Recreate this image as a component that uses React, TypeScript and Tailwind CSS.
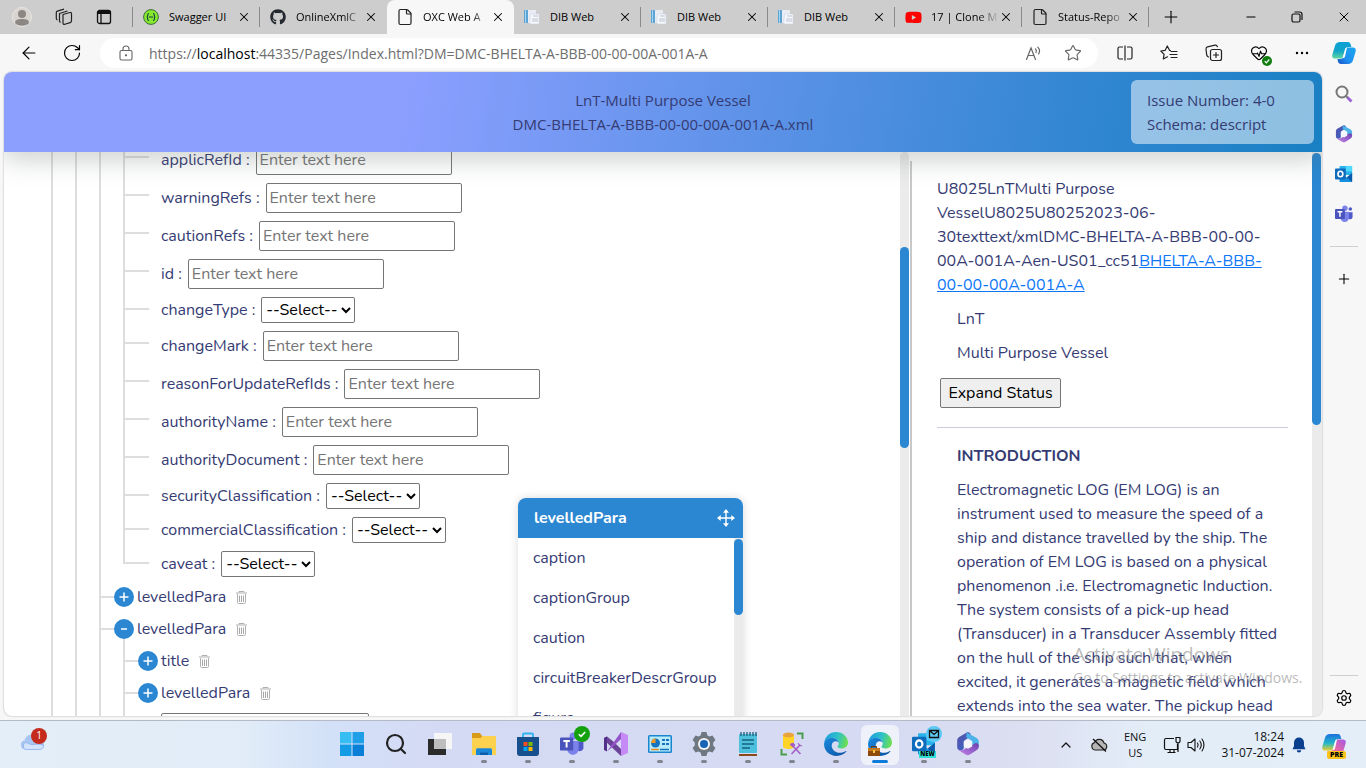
import React from "react";
import {
  ArrowLeft,
  ChevronUp,
  File,
  HeartPulse,
  Minus,
  Plus,
  RotateCw,
  Search,
  Settings,
  Star,
  X,
} from "lucide-react";
import { FaGithub, FaYoutube } from "react-icons/fa";

const ui = "font-['Open_Sans','Noto_Sans',sans-serif]";

/* ---------- brand and system icons ---------- */

function Swagger() {
  return (
    <svg viewBox="0 0 16 16" className="size-4">
      <circle cx="8" cy="8" r="7.4" fill="#85ea2d" stroke="#3c6b3a" strokeWidth="1" />
      <path d="M6 4.500c-1.600 0-1.200 1.300-1.300 2.300S4.300 8 3.700 8c.6 0 1 .2 1 1.200s-.3 2.300 1.300 2.300M10 4.500c1.600 0 1.200 1.300 1.300 2.300S11.700 8 12.300 8c-.6 0-1 .2-1 1.200s.3 2.300-1.300 2.300M6 8h4" fill="none" stroke="#173647" strokeWidth="1.100" />
    </svg>
  );
}

function DibIcon() {
  return (
    <svg viewBox="0 0 16 16" className="size-4">
      <rect x="0" y="1" width="4" height="13" fill="#5aa5d6" />
      <rect x="1" y="1" width="1" height="13" fill="#a8d3ee" />
      <rect x="4" y="1" width="8" height="13" fill="#e9edf3" />
      <path d="M7 5h8v10H6V9z" fill="#f7f8fb" stroke="#cdd3df" strokeWidth=".6" />
      <path d="M9 7h5M8 10h6M8 12h6" stroke="#b9c1d2" />
    </svg>
  );
}

function Copilot({ pre = false }: { pre?: boolean }) {
  return (
    <svg viewBox="0 0 24 24" className="size-6">
      <defs>
        <linearGradient id={pre ? "cpa" : "cba"} x1="0" y1="0" x2="0" y2="1">
          <stop offset="0" stopColor={pre ? "#1b6fe0" : "#0a9fd6"} />
          <stop offset=".55" stopColor={pre ? "#20b6c9" : "#12a5c8"} />
          <stop offset="1" stopColor={pre ? "#e8d030" : "#5fd8a0"} />
        </linearGradient>
        <linearGradient id={pre ? "cpb" : "cbb"} x1="1" y1="0" x2="0" y2="1">
          <stop offset="0" stopColor={pre ? "#a259e8" : "#1ba6ef"} />
          <stop offset=".6" stopColor={pre ? "#ee6aa0" : "#1e90f0"} />
          <stop offset="1" stopColor={pre ? "#f08a3c" : "#1a4fc4"} />
        </linearGradient>
      </defs>
      <path d="M8 1h8c1.500 0 2.300 1 2.700 2.500L19.400 6h-3c-2 0-2.800 1-3.300 2.700l-1.800 6.500c-.5 1.700-1.500 2.300-3 2.300H3C.8 17.500-.2 16 .4 13.600L3 4.700C3.800 2.200 5.500 1 8 1z" fill={`url(#${pre ? "cpa" : "cba"})`} />
      <path d="M16 23H9c-1.700 0-2.600-1-3-2.500L5.400 18h3c2 0 2.800-1 3.300-2.700l1.800-6.500C14 7 15 6.500 16.500 6.500H21c2.200 0 3.200 1.500 2.600 3.900L21 19.300c-.8 2.500-2.500 3.700-5 3.700z" fill={`url(#${pre ? "cpb" : "cbb"})`} />
      <path d="M10.600 17 13 8.500c.4-1.300 1-1.900 2-2l-2 9c-.4 1.200-1.200 1.600-2.400 1.500z" fill="#fff" />
    </svg>
  );
}

function M365({ className }: { className: string }) {
  return (
    <svg viewBox="0 0 20 20" className={className}>
      <defs>
        <linearGradient id="m3a" x1="0" y1="0" x2="1" y2="1">
          <stop offset="0" stopColor="#5b50a8" />
          <stop offset="1" stopColor="#2e69c8" />
        </linearGradient>
        <linearGradient id="m3b" x1="0" y1="1" x2="1" y2="0">
          <stop offset="0" stopColor="#c887ec" />
          <stop offset="1" stopColor="#6a3fae" />
        </linearGradient>
      </defs>
      <path d="M9 .5 3 4C1.600 4.800 1 5.800 1 7.300v5.500c0 1.500 1.300 2.700 3.200 2.500 1.600-.2 2.300-1.200 2.300-2.800V8.700c0-1 .4-1.700 1.300-2.200L12 4C13 2 11.500-.5 9 .5z" fill="url(#m3a)" />
      <path d="m9 .5 7.500 4C18.400 5.500 19 6.500 19 8.200v3.300c0 1.300-.8 2.300-2.300 2L13.500 12V8.700c0-1-.3-1.600-1.200-2.100L8.500 4.400z" fill="#4cb2e8" />
      <path d="M1.200 13.500c.8 1.700 3.300 2.300 5 1.300l9.500-5.300c1.700-.9 3.300.5 3.300 2.200 0 1.700-.7 2.700-2 3.500l-5.300 3.500c-1.300.8-2.500.8-3.800 0l-5-3c-1-.6-1.500-1.300-1.700-2.200z" fill="url(#m3b)" />
      <path d="m10 6 3.500 2v4L10 14l-3.500-2V8z" fill="#f5f6fb" />
    </svg>
  );
}

function Outlook({ className }: { className: string }) {
  return (
    <svg viewBox="0 0 20 20" className={className}>
      <path d="M6 1h12c.6 0 1 .4 1 1v9H5V2c0-.6.400-1 1-1z" fill="#28b2ec" />
      <path d="M12 1h7v6h-7z" fill="#50d9ff" />
      <path d="M5 9l8 5 6-5v9c0 .6-.4 1-1 1H6c-.6 0-1-.4-1-1z" fill="#1490df" />
      <path d="m19 9-6 5 6 5z" fill="#0a5cab" />
      <rect x="0" y="4" width="12" height="12" rx="1" fill="#0f6cbd" />
      <ellipse cx="6" cy="10" rx="2.700" ry="3" fill="none" stroke="#fff" strokeWidth="1.800" />
    </svg>
  );
}

function Teams({ className }: { className: string }) {
  return (
    <svg viewBox="0 0 20 20" className={className}>
      <circle cx="11" cy="3.500" r="3" fill="#7b83eb" />
      <circle cx="17" cy="4.500" r="2" fill="#5059c9" />
      <path d="M14 8h5.500v5.500a3 3 0 0 1-5.500 1z" fill="#5059c9" />
      <path d="M6 7.500h9.500V14c0 3-2 5-4.700 5S6 17 6 14z" fill="#7b83eb" />
      <rect x="0" y="4.500" width="11" height="11" rx="1" fill="#4b53bc" />
      <path d="M2.800 7.500h5.400M5.500 7.500v5.500" stroke="#fff" strokeWidth="1.600" />
    </svg>
  );
}

function SplitScreen() {
  return (
    <svg viewBox="0 0 16 16" className="size-4" fill="none" stroke="#222" strokeWidth="1.200">
      <path d="M6 2H2.500C1.500 2 1 2.500 1 3.500v9c0 1 .5 1.500 1.500 1.500H6M10 2h3.500c1 0 1.500.5 1.500 1.500v9c0 1-.5 1.500-1.500 1.500H10M8 .5v15" />
    </svg>
  );
}

function FavoritesList() {
  return (
    <svg viewBox="0 0 18 16" className="h-4 w-[18px]" fill="none" stroke="#222" strokeWidth="1.200" strokeLinejoin="round" strokeLinecap="round">
      <path d="M10.500 5.500 9.500 5.300 7.300 1 5.200 5.300.8 6l3.300 3.300-.8 4.700 4.200-2.200M11 6.500h6M10 9.500h7M11 12.500h6" />
    </svg>
  );
}

function Collections() {
  return (
    <svg viewBox="0 0 18 18" className="size-[18px]" fill="none" stroke="#222" strokeWidth="1.200" strokeLinejoin="round" strokeLinecap="round">
      <rect x="5.500" y="5.500" width="11" height="11" rx="2" />
      <path d="M11 8.500v5M8.500 11h5M3.500 13C2.500 12.700 2 12 1.700 11L1 5c-.1-1.300.5-2 1.500-2.200L10 1.200c1.300-.2 2 .3 2.400 1.500" />
    </svg>
  );
}

function ReadAloud() {
  return (
    <svg viewBox="0 0 18 16" className="h-4 w-[18px]" fill="none" stroke="#666" strokeWidth="1.200" strokeLinecap="round">
      <path d="M1.500 14.500 6 3l4.500 11.500M3 10.500h6M10.500 4c1 1 1 2.500.5 3.500M12.800 2.200c2 2 2 4.800.8 6.800" />
    </svg>
  );
}

function LockIcon() {
  return (
    <svg viewBox="0 0 14 16" className="h-4 w-3.5" fill="none" stroke="#666" strokeWidth="1.100">
      <rect x="1" y="5.500" width="12" height="9.500" rx="1.500" />
      <path d="M4 5.500V4a3 3 0 0 1 6 0v1.500" />
      <circle cx="7" cy="10.300" r=".6" fill="#666" />
    </svg>
  );
}

function Workspaces() {
  return (
    <svg viewBox="0 0 18 18" className="size-[18px]" fill="none" stroke="#222" strokeWidth="1.200" strokeLinejoin="round">
      <path d="m8 6.500 7-2c1-.2 1.500.2 1.500 1.200v7c0 1-.4 1.600-1.300 1.900l-5.400 1.700c-1.100.3-1.800-.1-1.800-1.300zM5.500 14.500C4.700 14.200 4.500 13.500 4.500 13V5.500L12.500 3M2.500 12C1.600 11.700 1.300 11 1.300 10.200V4.500c0-.8.4-1.200 1-1.400L9 1.200" />
    </svg>
  );
}

function TabActions() {
  return (
    <svg viewBox="0 0 16 16" className="size-4" fill="none" stroke="#111" strokeWidth="1.300">
      <rect x="1.500" y="1.500" width="13" height="13" rx="2" />
      <path d="M1.500 3.500h13" strokeWidth="3" />
      <path d="M5 5v9.500" />
    </svg>
  );
}

function TrashCan() {
  return (
    <svg viewBox="0 0 11 13" className="h-[13px] w-[11px]" fill="none" stroke="#b0b0b0" strokeWidth="1">
      <path d="M0 2h11M3 1.500V.5h5v1M1.500 3v8.500c0 .6.400 1 1 1h6c.6 0 1-.4 1-1V3" />
      <path d="M3.500 4.500v6.500M5.500 4.500v6.500M7.500 4.500v6.500" stroke="#8f8f8f" strokeWidth=".8" />
    </svg>
  );
}

function MoveIcon() {
  return (
    <svg viewBox="0 0 18 18" className="size-[18px]" fill="#fff">
      <path d="M9 0l3 3.700H6zM9 18l3-3.700H6zM0 9l3.700-3v6zM18 9l-3.700-3v6z" />
      <path d="M8.300 3h1.400v12H8.300zM3 8.300h12v1.400H3z" />
    </svg>
  );
}

function EdgeLogo({ work = false }: { work?: boolean }) {
  const id = work ? "w" : "e";
  return (
    <svg viewBox="0 0 24 24" className="size-6">
      <defs>
        <linearGradient id={id + "g"} x1="0" y1=".3" x2="1" y2=".5">
          <stop offset="0" stopColor="#1d9de0" />
          <stop offset=".55" stopColor="#2fc2c8" />
          <stop offset="1" stopColor="#6ddf4f" />
        </linearGradient>
        <linearGradient id={id + "b"} x1="0" y1="0" x2="1" y2="1">
          <stop offset="0" stopColor="#1b8be0" />
          <stop offset="1" stopColor="#0b4f9e" />
        </linearGradient>
      </defs>
      <path d="M.2 10.800C.8 4.600 5.800 0 12 0c6.800 0 12 5 12 10.500 0 3.800-3 6-6.300 6-3 0-4.500-1.200-4.200-2 .9-1.100 1.200-2 1.200-3.200 0-3-3-5.300-7-5.300C4 6 1.500 8 .2 10.800z" fill={`url(#${id}g)`} />
      <path d="M.1 11.500C.8 7.800 3.800 6 7.700 6c3.500 0 6.500 1.800 7 4.600-1-1-2.200-1.500-3.600-1.300-2.500.5-3.800 3-3.300 5.500.7 4 5 6.500 9.200 6 1.800-.2 3.200-.7 4.700-1.700.5-.3.900 0 .6.500C20 22.500 16.400 24 12.500 24 5.500 24-.6 18.500.1 11.500z" fill={`url(#${id}b)`} />
      {work && (
        <g>
          <path d="M0 16h12v8H0z" fill="#c9781b" />
          <path d="M0 19h12v5H0z" fill="#8d4a0c" />
          <path d="M3.500 16v-1.500h5V16" fill="none" stroke="#6d3706" />
          <rect x="5" y="18" width="2" height="3" fill="#f7c948" />
        </g>
      )}
    </svg>
  );
}

function Explorer() {
  return (
    <svg viewBox="0 0 24 24" className="size-6">
      <path d="M0 2c0-.8.500-1 1-1h7l2 3v4H0z" fill="#d99a17" />
      <path d="M0 6h8.500L10.500 4H23c.6 0 1 .4 1 1v17c0 .6-.4 1-1 1H1c-.6 0-1-.4-1-1z" fill="#fdd150" />
      <path d="M4 23v-5c0-1 .6-1.700 1.700-1.700h12.600c1.100 0 1.700.7 1.700 1.700v5z" fill="#1a86d8" />
      <path d="M8 23v-2.500h8V23z" fill="#0b5cab" />
    </svg>
  );
}

function Store() {
  return (
    <svg viewBox="0 0 24 24" className="size-6">
      <path d="M7 6V2.500c0-.6.400-1 1-1h8c.6 0 1 .4 1 1V6" fill="none" stroke="#2fb4ee" strokeWidth="1.800" />
      <path d="M1 5h22v16c0 1.700-1 3-2.700 3H3.700C2 24 1 22.700 1 21z" fill="#17508c" />
      <path d="M7.500 10h4v4h-4z" fill="#f25022" />
      <path d="M12.500 10h4v4h-4z" fill="#7fba00" />
      <path d="M7.500 15h4v4h-4z" fill="#00a4ef" />
      <path d="M12.500 15h4v4h-4z" fill="#ffb900" />
    </svg>
  );
}

function VisualStudio() {
  return (
    <svg viewBox="0 0 24 24" className="size-6">
      <path d="m0 6 3-1.500L20 18l-3 6L0 8z" fill="#6b4398" />
      <path d="M0 6v12l3 1.500V4.500z" fill="#52308a" />
      <path d="M3 19.500 17 0l1 7L6 17z" fill="#9455c8" />
      <path d="m17 0 7 3v18l-7 3z" fill="#c58af5" />
      <path d="m17 7-5 5 5 5z" fill="#d6dcf4" />
    </svg>
  );
}

function ControlPanel() {
  return (
    <svg viewBox="0 0 24 24" className="size-6">
      <rect x="0" y="3" width="24" height="18" rx="1.500" fill="#1a86cf" />
      <rect x="1.500" y="4.500" width="21" height="15" fill="#b9ecfb" />
      <circle cx="7.500" cy="11" r="4.500" fill="#1673c0" />
      <path d="M7.500 11V6.500A4.500 4.500 0 0 0 3 11z" fill="#f29b27" />
      <path d="M14 8h3M18 8h3M14 12h3M18 12h3" stroke="#1673c0" strokeWidth="2" />
      <path d="M3 17.500h8" stroke="#e78a1f" strokeWidth="1.500" />
      <path d="M12 17.500h9" stroke="#1673c0" strokeWidth="1.500" />
    </svg>
  );
}

function GearApp() {
  return (
    <svg viewBox="0 0 24 24" className="size-6">
      <path d="m9.500 0h5l.8 3.300 2 1.100 3.200-1L23.500 8l-2.300 2.500v3L23.500 16l-3 4.600-3.200-1-2 1.100-.8 3.300h-5l-.8-3.300-2-1.100-3.200 1L.5 16l2.300-2.500v-3L.5 8l3-4.600 3.200 1 2-1.100z" fill="#6f7880" />
      <circle cx="12" cy="12" r="6" fill="#eef2f7" />
      <circle cx="12" cy="12" r="4" fill="#1763b6" />
    </svg>
  );
}

function Notepad() {
  return (
    <svg viewBox="0 0 24 24" className="size-6">
      <rect x="3" y="2" width="18" height="19" rx="1" fill="#4cc0dc" />
      <path d="M5 0v4M8 0v4M11 0v4M14 0v4M17 0v4M20 0v4" stroke="#1c5c7a" strokeWidth="1.300" />
      <path d="M6 8h12M6 12h12M6 16h8" stroke="#17607c" strokeWidth="1.500" />
      <path d="M3 23h18" stroke="#8c4a1c" strokeWidth="2" />
    </svg>
  );
}

function SqlStudio() {
  return (
    <svg viewBox="0 0 24 24" className="size-6">
      <path d="M3 2.500v12C3 16 6 17 9 17s5-1 5-2.500v-12z" fill="#ffd426" />
      <ellipse cx="8.500" cy="3" rx="5.500" ry="2.500" fill="#e9a53b" />
      <path d="M17 1.500h5.500V7M1.500 17v5.500H7" fill="none" stroke="#4b9e4b" strokeWidth="2" />
      <path d="m12 13 8.500 9M20 13l-8.500 9" stroke="#a45fc4" strokeWidth="1.600" />
      <path d="m10 12.500 3-1.500 2 2-2 2zM18 11l1.500 2.500L22 14" fill="#a45fc4" stroke="#a45fc4" />
    </svg>
  );
}

function WindowsLogo() {
  return (
    <svg viewBox="0 0 24 24" className="size-6">
      <path d="M0 0h11.500v11.500H0z" fill="#35bdf4" />
      <path d="M12.500 0H24v11.500H12.500z" fill="#1e9fe8" />
      <path d="M0 12.500h11.500V24H0z" fill="#149be6" />
      <path d="M12.500 12.500H24V24H12.500z" fill="#0a7fd8" />
    </svg>
  );
}

function TaskView() {
  return (
    <svg viewBox="0 0 24 24" className="size-6">
      <path d="M0 7h18v16H0z" fill="#2b2b2b" />
      <path d="M6 1h18v16H6z" fill="#f6f6f6" />
      <path d="M6 7h12v10H6z" fill="#bdbdbd" />
    </svg>
  );
}

/* ---------- browser chrome ---------- */

type TabInfo = { title: string; icon: React.ReactNode; active?: boolean; nextActive?: boolean };

const page = <File className="size-[18px] text-[#222]" strokeWidth={1.6} />;

const tabs: TabInfo[] = [
  { title: "Swagger UI", icon: <Swagger /> },
  { title: "OnlineXmlC", icon: <FaGithub className="size-4 text-[#24292f]" />, nextActive: true },
  { title: "OXC Web A", icon: page, active: true },
  { title: "DIB Web", icon: <DibIcon /> },
  { title: "DIB Web", icon: <DibIcon /> },
  { title: "DIB Web", icon: <DibIcon /> },
  { title: "17 | Clone M", icon: <FaYoutube className="size-[17px] text-[#ff0000]" /> },
  { title: "Status-Repo", icon: page },
];

function TabStrip() {
  return (
    <div className="flex h-[34px] shrink-0 items-center bg-[#cdcdcd]">
      <div className="flex h-5 w-[133px] shrink-0 items-center justify-between border-r border-[#8a8a8a] pr-5 pl-3">
        <svg viewBox="0 0 20 20" className="size-5">
          <circle cx="10" cy="10" r="9.500" fill="#d8d5d0" stroke="#e8e6e3" />
          <circle cx="10" cy="7" r="4" fill="#8c8784" />
          <path d="M3 16c0-3 2-4 7-4s7 1 7 4c-3 3.500-11 3.500-14 0z" fill="#8c8784" />
        </svg>
        <Workspaces />
        <TabActions />
      </div>
      {tabs.map((t, i) => (
        <div
          key={i}
          className={`flex w-[127px] shrink-0 items-center ${
            t.active ? "h-[34px] rounded-t-lg bg-[#f7f7f7]" : "h-5"
          } ${t.active || t.nextActive ? "" : "border-r border-[#8a8a8a]"}`}
        >
          <span className="flex w-9 shrink-0 justify-center">{t.icon}</span>
          <span className={`w-[68px] text-[11px] whitespace-nowrap text-black ${t.title.length > 8 && i > 0 ? "mask-r-from-70% mask-r-to-100%" : ""}`}>
            {t.title}
          </span>
          <button aria-label={`Close ${t.title}`}>
            <X className="size-3.5" strokeWidth={1.800} />
          </button>
        </div>
      ))}
      <button aria-label="New tab" className="ml-3">
        <Plus className="size-5" strokeWidth={1.300} />
      </button>
      <div className="ml-auto flex items-center gap-8 pr-3.5">
        <button aria-label="Minimize">
          <Minus className="size-3.5" strokeWidth={1.800} />
        </button>
        <button aria-label="Restore">
          <svg viewBox="0 0 14 14" className="size-3.5" fill="none" stroke="#111" strokeWidth="1.200">
            <rect x="2" y="4" width="8" height="8" rx="1.500" />
            <path d="M4.500 2h5C11.300 2 12 2.700 12 4.500V10" />
          </svg>
        </button>
        <button aria-label="Close window">
          <X className="size-4" strokeWidth={1.500} />
        </button>
      </div>
    </div>
  );
}

function Toolbar() {
  return (
    <div className="flex h-[38px] shrink-0 items-center bg-[#f7f7f7] pr-2.5 pl-[19px]">
      <button aria-label="Back">
        <ArrowLeft className="size-5" strokeWidth={1.400} />
      </button>
      <button aria-label="Refresh" className="ml-[23px]">
        <RotateCw className="size-5" strokeWidth={1.400} />
      </button>
      <div className="ml-[18px] flex h-[30px] flex-1 items-center rounded-full bg-white pr-4 pl-[19px]">
        <LockIcon />
        <p className="ml-4 flex-1 text-[14px] whitespace-nowrap text-[#6e6e6e]">
          https://<span className="text-black">localhost</span>:44335/Pages/Index.html?DM=DMC-BHELTA-A-BBB-00-00-00A-001A-A
        </p>
        <button aria-label="Read aloud" className="mr-[21px]">
          <ReadAloud />
        </button>
        <button aria-label="Add to favorites">
          <Star className="size-[18px] text-[#666]" strokeWidth={1.500} />
        </button>
      </div>
      <div className="ml-[19px] flex items-center gap-[27px]">
        <button aria-label="Split screen"><SplitScreen /></button>
        <button aria-label="Favorites"><FavoritesList /></button>
        <button aria-label="Collections"><Collections /></button>
        <button aria-label="Browser essentials" className="relative">
          <HeartPulse className="size-[18px]" strokeWidth={1.500} />
          <svg viewBox="0 0 10 10" className="absolute -right-1 -bottom-1 size-2.5">
            <circle cx="5" cy="5" r="5" fill="#107c10" />
            <path d="m2.700 5.200 1.600 1.600 3-3.300" fill="none" stroke="#fff" strokeWidth="1.200" />
          </svg>
        </button>
        <button aria-label="More">
          <svg viewBox="0 0 14 4" className="h-1 w-3.5"><circle cx="2" cy="2" r="1.200" /><circle cx="7" cy="2" r="1.200" /><circle cx="12" cy="2" r="1.200" /></svg>
        </button>
        <button aria-label="Copilot" className="-ml-1"><Copilot /></button>
      </div>
    </div>
  );
}

function Sidebar() {
  return (
    <aside className="flex w-11 shrink-0 flex-col items-center bg-[#f7f7f7]">
      <div className="mt-[13px] flex flex-col items-center gap-[22px]">
        <button aria-label="Search" className="flex">
          <svg viewBox="0 0 18 18" className="size-[18px]" fill="none">
            <circle cx="7" cy="7" r="5.500" stroke="#777" strokeWidth="2" />
            <path d="m11 11 2.500 2.500" stroke="#777" strokeWidth="2" />
            <path d="m12.500 12.500 4 4" stroke="#9b62d8" strokeWidth="2.800" />
          </svg>
        </button>
        <button aria-label="Microsoft 365" className="flex"><M365 className="size-[18px]" /></button>
        <button aria-label="Outlook" className="flex"><Outlook className="size-[18px]" /></button>
        <button aria-label="Teams" className="flex"><Teams className="size-[18px]" /></button>
      </div>
      <div className="mt-[23px] h-px w-7 bg-[#cfcfcf]" />
      <button aria-label="Customize sidebar" className="mt-6">
        <Plus className="size-4" strokeWidth={1.600} />
      </button>
      <div className="mt-auto h-px w-7 bg-[#cfcfcf]" />
      <button aria-label="Settings" className="mt-[13px] mb-[9px]">
        <Settings className="size-[18px]" strokeWidth={1.600} />
      </button>
    </aside>
  );
}

/* ---------- element tree ---------- */

const attributes: { name: string; kind: "text" | "select" }[] = [
  { name: "applicRefId", kind: "text" },
  { name: "warningRefs", kind: "text" },
  { name: "cautionRefs", kind: "text" },
  { name: "id", kind: "text" },
  { name: "changeType", kind: "select" },
  { name: "changeMark", kind: "text" },
  { name: "reasonForUpdateRefIds", kind: "text" },
  { name: "authorityName", kind: "text" },
  { name: "authorityDocument", kind: "text" },
  { name: "securityClassification", kind: "select" },
  { name: "commercialClassification", kind: "select" },
  { name: "caveat", kind: "select" },
];

function AttributeRow({ name, kind, last }: { name: string; kind: string; last: boolean }) {
  return (
    <div className="flex">
      <div className={`w-[26px] border-l-2 border-[#dddddd] ${last ? "h-[13px]" : ""}`}>
        <div className="h-[13px] border-b-2 border-[#dddddd]" />
      </div>
      <div className={`ml-3 flex items-center gap-1.5 whitespace-nowrap ${last ? "" : "pb-2"}`}>
        <label htmlFor={name}>{name} :</label>
        {kind === "text" ? (
          <input
            id={name}
            placeholder="Enter text here"
            className="h-[30px] w-[196px] rounded-xs border border-[#767676] bg-white px-[3px] placeholder:text-[#757575]"
          />
        ) : (
          <select id={name} className="h-[26px] w-[94px] rounded-xs border border-[#767676] bg-white text-black">
            <option>--Select--</option>
          </select>
        )}
      </div>
    </div>
  );
}

function TreeNode({ name, open = false }: { name: string; open?: boolean }) {
  return (
    <div className="flex h-8 items-center">
      <div className="h-0.5 w-[13px] bg-[#dddddd]" />
      <button
        aria-label={open ? `Collapse ${name}` : `Expand ${name}`}
        className="flex size-5 items-center justify-center rounded-full bg-[#2b87d1] text-white"
      >
        {open ? (
          <svg viewBox="0 0 10 10" className="size-2.5"><path d="M2 5h6" stroke="#fff" strokeWidth="1.700" /></svg>
        ) : (
          <svg viewBox="0 0 10 10" className="size-2.5"><path d="M.5 5h9M5 .5v9" stroke="#fff" strokeWidth="1.500" /></svg>
        )}
      </button>
      <span className="ml-[3px]">{name}</span>
      <button aria-label={`Delete ${name}`} className="ml-2.5">
        <TrashCan />
      </button>
    </div>
  );
}

function TreePane() {
  return (
    <section className="flex min-w-0 flex-1 overflow-hidden">
      <div className="flex flex-1 overflow-hidden pl-[47px]">
        <div className="w-6 shrink-0 border-l-2 border-[#dddddd]" />
        <div className="w-6 shrink-0 border-l-2 border-[#dddddd]" />
        <div className="-mt-[7px] flex-1 border-l-2 border-[#dddddd]">
          <div className="mb-1 pl-[22px]">
            {attributes.map((a, i) => (
              <AttributeRow key={a.name} {...a} last={i === attributes.length - 1} />
            ))}
          </div>
          <TreeNode name="levelledPara" />
          <TreeNode name="levelledPara" open />
          <div className="-mt-1.5 ml-[22px] border-l-2 border-[#dddddd] pt-1.5">
            <TreeNode name="title" />
            <TreeNode name="levelledPara" />
            <input aria-label="levelledPara value" className="mt-1 ml-9 h-[30px] w-[208px] rounded-xs border border-[#767676] bg-white px-1" />
          </div>
        </div>
      </div>
      <div className="w-[9px] shrink-0 rounded-t-md bg-[#ebebeb] pt-[95px]">
        <div className="h-[201px] rounded-full bg-[#2b87d1]" />
      </div>
    </section>
  );
}

/* ---------- document preview ---------- */

function PreviewPane() {
  return (
    <section className="flex w-[413px] shrink-0 overflow-hidden">
      <div className="mt-[9px] ml-px w-0.5 shrink-0 bg-[#c8c8c8]" />
      <div className="min-w-0 flex-1 overflow-hidden pt-[25px] pr-6 pl-[25px] leading-6 whitespace-nowrap">
        <p>
          U8025LnTMulti Purpose
          <br />
          VesselU8025U80252023-06-
          <br />
          30texttext/xmlDMC-BHELTA-A-BBB-00-00-
          <br />
          00A-001A-Aen-US01_cc51
          <a href="#dm" className="text-[#0d76f9] underline">
            BHELTA-A-BBB-
            <br />
            00-00-00A-001A-A
          </a>
        </p>
        <p className="mt-2.5 ml-5">LnT</p>
        <p className="mt-2.5 ml-5">Multi Purpose Vessel</p>
        <button className="mt-[13px] ml-[3px] h-[30px] w-[121px] rounded-xs border border-[#767676] bg-[#efefef] text-black">
          Expand Status
        </button>
        <hr className="mt-[19px] border-[#cbcddb]" />
        <h2 className="mt-4 ml-5 font-bold">INTRODUCTION</h2>
        <p className="mt-2.5 ml-5">
          Electromagnetic LOG (EM LOG) is an
          <br />
          instrument used to measure the speed of a
          <br />
          ship and distance travelled by the ship. The
          <br />
          operation of EM LOG is based on a physical
          <br />
          phenomenon .i.e. Electromagnetic Induction.
          <br />
          The system consists of a pick-up head
          <br />
          (Transducer) in a Transducer Assembly fitted
          <br />
          on the hull of the ship such that, when
          <br />
          excited, it generates a magnetic field which
          <br />
          extends into the sea water. The pickup head
        </p>
      </div>
      <div className="w-[10px] shrink-0 bg-[#ebebeb] pt-px pr-px">
        <div className="h-[272px] rounded-full bg-[#2b87d1]" />
      </div>
    </section>
  );
}

function ElementMenu() {
  return (
    <div className="absolute top-[426px] left-[514px] z-20 w-[225px] rounded-t-lg bg-white shadow-[0_0_10px_rgba(0,0,0,0.15)]">
      <div className="flex h-10 items-center justify-between rounded-t-lg bg-[#2b87d1] pr-2 pl-4 font-bold text-white">
        levelledPara
        <MoveIcon />
      </div>
      <div className="flex">
        <ul className="flex-1 pl-[15px]">
          {["caption", "captionGroup", "caution", "circuitBreakerDescrGroup", "figure"].map((n) => (
            <li key={n} className="flex h-10 items-center">{n}</li>
          ))}
        </ul>
        <div className="w-[9px] bg-[#ebebeb] pt-px">
          <div className="h-19 rounded-full bg-[#2b87d1]" />
        </div>
      </div>
    </div>
  );
}

function WebPage() {
  return (
    <main className="relative ml-1 flex min-w-0 flex-1 flex-col overflow-hidden rounded-lg bg-white font-[Nunito,Lato,sans-serif] text-[16px] leading-6 text-[#353b73] shadow-[0_0_2px_rgba(0,0,0,0.35)]">
      <header className={`relative z-10 flex h-20 shrink-0 items-center bg-[linear-gradient(100deg,#8c9fff_30%,#3487d3_80%,#1980c3_100%)] pr-2 shadow-[0_8px_24px_rgba(90,105,100,0.3)] ${ui}`}>
        <div className="w-[191px] shrink-0" />
        <div className="flex-1 text-center text-[15px]">
          <p>LnT-Multi Purpose Vessel</p>
          <p>DMC-BHELTA-A-BBB-00-00-00A-001A-A.xml</p>
        </div>
        <div className="w-[183px] shrink-0 rounded-md bg-white/50 px-4 py-2 text-[15px]">
          <p>Issue Number: 4-0</p>
          <p>Schema: descript</p>
        </div>
      </header>
      <div className="flex min-h-0 flex-1">
        <TreePane />
        <PreviewPane />
      </div>
      <ElementMenu />
      <div className={`pointer-events-none absolute right-3 bottom-7 z-30 w-[237px] whitespace-nowrap text-[#8a8a8a]/60 ${ui}`}>
        <p className="mb-0.5 text-[19px] leading-6">Activate Windows</p>
        <p className="text-[14px] leading-5">Go to Settings to activate Windows.</p>
      </div>
    </main>
  );
}

/* ---------- taskbar ---------- */

const apps: { name: string; icon: React.ReactNode; running?: boolean; active?: boolean }[] = [
  { name: "Start", icon: <WindowsLogo /> },
  { name: "Search", icon: <Search className="size-6 text-[#222]" strokeWidth={2.200} /> },
  { name: "Task view", icon: <TaskView /> },
  { name: "File Explorer", icon: <Explorer />, running: true },
  { name: "Store", icon: <Store />, running: true },
  {
    name: "Teams",
    running: true,
    icon: (
      <>
        <Teams className="size-6" />
        <svg viewBox="0 0 16 16" className="absolute -top-1.5 -right-1.5 size-4">
          <circle cx="8" cy="8" r="8" fill="#13a10e" />
          <path d="m4.800 8.200 2.200 2.200 4.200-4.400" fill="none" stroke="#fff" strokeWidth="1.600" />
        </svg>
      </>
    ),
  },
  { name: "Visual Studio", icon: <VisualStudio />, running: true },
  { name: "Control Panel", icon: <ControlPanel />, running: true },
  { name: "Settings app", icon: <GearApp />, running: true },
  { name: "Notepad", icon: <Notepad />, running: true },
  { name: "SQL Studio", icon: <SqlStudio />, running: true },
  { name: "Edge", icon: <EdgeLogo />, running: true },
  { name: "Edge work", icon: <EdgeLogo work />, active: true },
  {
    name: "Outlook new",
    running: true,
    icon: (
      <>
        <Outlook className="size-6" />
        <svg viewBox="0 0 16 16" className="absolute -top-1.5 -right-1.5 size-4">
          <circle cx="8" cy="8" r="8" fill="#5cc8f5" />
          <path d="M3.500 4.500h9v7h-9zl4.500 4 4.500-4" fill="none" stroke="#111" strokeWidth="1.300" />
        </svg>
        <span className="absolute right-0 -bottom-0.5 bg-[#2fe0d8] px-px text-[6px] leading-[7px] font-extrabold text-black">NEW</span>
      </>
    ),
  },
  { name: "Microsoft 365 app", icon: <M365 className="size-6" />, running: true },
];

function Taskbar() {
  return (
    <footer className="flex h-12 shrink-0 items-center border-t border-[#b4bac6] bg-[linear-gradient(90deg,#e3eef8_0%,#e1ecf8_18%,#d3e1f8_24%,#d5daf4_32%,#d6dbf3_65%,#dcdff1_75%,#e3edf8_84%,#e3eef9_100%)]">
      <div className="mr-0.5 flex w-[24%] shrink-0 pl-5">
        <button aria-label="Weather" className="relative pb-1.5">
          <svg viewBox="0 0 24 16" className="h-4 w-6">
            <path d="M5 15.500a4.500 4.500 0 0 1-.5-8.900A7 7 0 0 1 18 5.500c3.500 0 6 2 6 5s-2 5-5 5z" fill="#a9c6f2" />
            <path d="M5 15.500a4.500 4.500 0 0 1 0-7c3 0 4 2 7 2s8-1 12 1c-.5 2.500-2 4-5 4z" fill="#d3e3fb" stroke="#7ba3e6" strokeWidth=".6" />
          </svg>
          <span className="absolute -top-1.5 -right-[3px] flex size-4 items-center justify-center rounded-full bg-[#c42b1c] text-[10px] text-white">1</span>
        </button>
      </div>
      {apps.map((a) => (
        <button key={a.name} aria-label={a.name} className="flex w-11 shrink-0 justify-center">
          <span className={`flex h-10 w-[38px] flex-col items-center rounded-md pt-[7px] ${a.active ? "bg-white/60" : ""}`}>
            <span className="relative flex">{a.icon}</span>
            {a.running && <span className="mt-1 h-[3px] w-1.5 rounded-full bg-[#80858f]" />}
            {a.active && <span className="mt-1 h-[3px] w-4 rounded-full bg-[#0f7bd8]" />}
          </span>
        </button>
      ))}
      <div className="ml-auto flex items-center pr-5 text-[#111]">
        <ChevronUp className="size-4" strokeWidth={1.800} />
        <svg viewBox="0 0 18 14" className="ml-4 h-3.5 w-[18px]">
          <path d="M5 12a3.800 3.800 0 0 1-.5-7.400A5 5 0 0 1 14 5a3.600 3.600 0 0 1 0 7z" fill="#b5b5b5" stroke="#222" strokeWidth="1.100" />
          <path d="m3 1 13 12.500" stroke="#111" strokeWidth="1.300" />
        </svg>
        <p className="ml-4 text-center text-[11px] leading-4">ENG<br />US</p>
        <svg viewBox="0 0 18 18" className="ml-[17px] size-[18px]" fill="none" stroke="#111" strokeWidth="1.200">
          <path d="M11 2.500H3C2 2.500 1.500 3 1.500 4v8c0 1 .5 1.500 1.500 1.500h11.500V8M4.500 16.500h8M7 13.500v3M11 13.500v3" />
          <path d="M13 1.500h4V5c0 1-.8 1.800-2 1.800S13 6 13 5zM15 7v9" />
        </svg>
        <svg viewBox="0 0 18 18" className="ml-1.5 size-[18px]" fill="none" stroke="#111" strokeWidth="1.100" strokeLinejoin="round" strokeLinecap="round">
          <path d="M1 6.500h3L8 3v12l-4-3.500H1zM10.500 7c.8 1.200.8 2.800 0 4M12.800 5c1.700 2.300 1.700 5.700 0 8M15 3c2.600 3.500 2.600 8.500 0 12" />
        </svg>
        <p className="ml-4 text-right text-[12px] leading-4">18:24<br />31-07-2024</p>
        <svg viewBox="0 0 14 16" className="ml-2 h-4 w-3.5" fill="#0a3f8f">
          <path d="M7 .5A5 5 0 0 0 2 5.500V9L.5 12.300h13L12 9V5.500a5 5 0 0 0-5-5zM4.800 13.300h4.400a2.200 2.200 0 0 1-4.400 0z" />
        </svg>
        <span className="relative ml-4 flex">
          <Copilot pre />
          <span className="absolute right-0 -bottom-0.5 rounded-xs bg-[#fbc31c] px-[3px] text-[7px] leading-2 font-extrabold text-black">PRE</span>
        </span>
      </div>
    </footer>
  );
}

export default function App() {
  return (
    <div className={`flex h-screen flex-col overflow-hidden bg-[#f7f7f7] ${ui}`}>
      <TabStrip />
      <Toolbar />
      <div className="flex min-h-0 flex-1 pb-1">
        <WebPage />
        <Sidebar />
      </div>
      <Taskbar />
    </div>
  );
}
